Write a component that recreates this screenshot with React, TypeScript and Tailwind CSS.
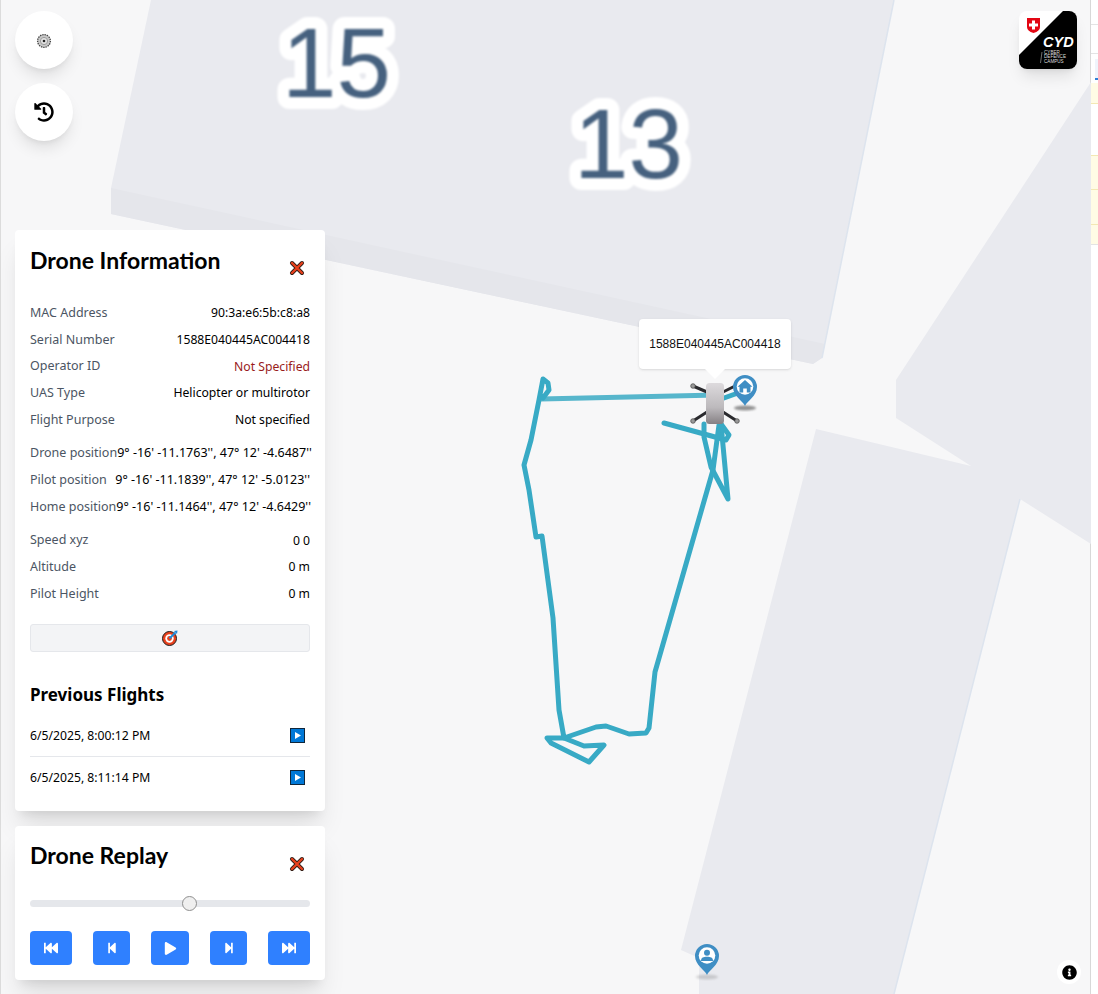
import { FaFastBackward, FaFastForward, FaHistory, FaInfoCircle, FaPlay, FaStepBackward, FaStepForward } from "react-icons/fa";

const infoRows = [
  { label: "MAC Address", value: "90:3a:e6:5b:c8:a8" },
  { label: "Serial Number", value: "1588E040445AC004418" },
  { label: "Operator ID", value: "Not Specified", missing: true },
  { label: "UAS Type", value: "Helicopter or multirotor" },
  { label: "Flight Purpose", value: "Not specified" },
];

const positionRows = [
  { label: "Drone position", value: "9° -16' -11.1763'', 47° 12' -4.6487''" },
  { label: "Pilot position", value: "9° -16' -11.1839'', 47° 12' -5.0123''" },
  { label: "Home position", value: "9° -16' -11.1464'', 47° 12' -4.6429''" },
];

const motionRows = [
  { label: "Speed xyz", value: "0 0" },
  { label: "Altitude", value: "0 m" },
  { label: "Pilot Height", value: "0 m" },
];

const flights = ["6/5/2025, 8:00:12 PM", "6/5/2025, 8:11:14 PM"];

function Row({ label, value, missing, wide }: { label: string; value: string; missing?: boolean; wide?: boolean }) {
  return (
    <div className="flex h-[26.7px] items-center justify-between whitespace-nowrap">
      <span className="text-[#4b5563]">{label}</span>
      <span className={`${wide ? "text-[12.5px]" : "text-[12.2px]"} ${missing ? "text-[#991b1b]" : "text-black"}`}>{value}</span>
    </div>
  );
}

function CloseIcon() {
  return (
    <svg width="16" height="16" viewBox="0 0 16 16" className="mt-[15px] mr-[5px] shrink-0">
      <path d="M3 3 L13 13 M13 3 L3 13" stroke="#2b1a14" strokeWidth="4" strokeLinecap="round" />
      <path d="M3 3 L13 13 M13 3 L3 13" stroke="#e8401c" strokeWidth="2.4" strokeLinecap="round" />
    </svg>
  );
}

function PlayBox() {
  return (
    <svg width="15" height="15" viewBox="0 0 15 15" className="mr-[5px]">
      <rect x="0.5" y="0.5" width="14" height="14" fill="#0078d7" stroke="#10263a" />
      <path d="M5 4 L11 7.5 L5 11 Z" fill="#fff" />
    </svg>
  );
}

function TargetIcon() {
  return (
    <svg width="16" height="16" viewBox="0 0 16 16">
      <circle cx="7.5" cy="8.5" r="7" fill="#e8401c" stroke="#1f1f1f" />
      <circle cx="7.5" cy="8.5" r="4.2" fill="#fff" />
      <circle cx="7.5" cy="8.5" r="2.4" fill="#e8401c" />
      <path d="M7.5 8.5 L13.5 2.5" stroke="#1e88d8" strokeWidth="2" />
      <path d="M12 1 L15.5 0.5 L15 4 Z" fill="#1e88d8" />
    </svg>
  );
}

function DroneGlyph() {
  return (
    <svg width="16" height="16" viewBox="0 0 16 16" className="mt-[1px]">
      <circle cx="8" cy="8" r="6.4" fill="#c9c9c9" stroke="#444" strokeWidth="1.3" strokeDasharray="1.4 0.9" />
      <circle cx="8" cy="8" r="3.6" fill="#e4e4e4" stroke="#9a9a9a" />
      <circle cx="8" cy="8" r="1.3" fill="#222" />
    </svg>
  );
}

function SwissLogo() {
  return (
    <div className="relative h-[58px] w-[58px] overflow-hidden rounded-lg bg-white shadow-lg">
      <svg width="58" height="58" viewBox="0 0 58 58" className="absolute inset-0">
        <path d="M44 0 H58 V58 H0 V44 Z" fill="#000" />
        <path d="M8 7 H21 V16 Q21 20 14.5 22 Q8 20 8 16 Z" fill="#e30613" />
        <path d="M13 9.5 H16 V12.5 H19 V15.5 H16 V18.5 H13 V15.5 H10 V12.5 H13 Z" fill="#fff" />
        <path d="M23 41 L21.5 52" stroke="#ddd" strokeWidth="0.5" />
      </svg>
      <span className="absolute top-[22px] left-[24px] font-['Liberation_Sans',sans-serif] text-[14.5px] leading-[19px] font-bold text-white italic">CYD</span>
      <div className="absolute top-[40px] left-[25px] font-['Liberation_Sans',sans-serif] text-[4.6px] leading-[4.4px] text-[#ddd]">
        <div>CYBER</div>
        <div>DEFENCE</div>
        <div>CAMPUS</div>
      </div>
    </div>
  );
}

function Pin({ kind }: { kind: "home" | "person" }) {
  return (
    <svg width="30" height="38" viewBox="0 0 30 38">
      <ellipse cx="15" cy="34" rx="11" ry="2.6" fill="#666" opacity={kind === "home" ? 0.7 : 0.25} className="blur-[1px]" />
      <path d="M15 32 C13 27 3 22 3 13 A12 12 0 0 1 27 13 C27 22 17 27 15 32 Z" fill="#3f8ec4" />
      <circle cx="15" cy="12.5" r="8.3" fill="#fff" />
      {kind === "home" ? (
        <path d="M15 6 L22.5 12.8 H20.5 V18.5 H16.8 V14.5 H13.2 V18.5 H9.5 V12.8 H7.5 Z" fill="#3f8ec4" />
      ) : (
        <>
          <circle cx="15" cy="9.8" r="3" fill="#3f8ec4" />
          <path d="M9 18 C9 14.5 11.5 13.8 15 13.8 C18.5 13.8 21 14.5 21 18 Z" fill="#3f8ec4" />
        </>
      )}
    </svg>
  );
}

function DroneMarker() {
  return (
    <svg width="52" height="44" viewBox="0 0 52 44">
      <defs>
        <linearGradient id="droneBody" x1="0" y1="0" x2="0" y2="1">
          <stop offset="0" stopColor="#dddadd" />
          <stop offset="0.6" stopColor="#bcb9bc" />
          <stop offset="1" stopColor="#858084" />
        </linearGradient>
      </defs>
      <path d="M4 4 L18 10 M46 4 L34 10 M4 39 L18 30 M48 39 L34 30" stroke="#2a2a2e" strokeWidth="3" />
      <circle cx="4" cy="4" r="2.3" fill="#999" stroke="#444" strokeWidth="0.7" />
      <circle cx="4" cy="39" r="2.3" fill="#999" stroke="#444" strokeWidth="0.7" />
      <circle cx="48" cy="39" r="2.3" fill="#999" stroke="#444" strokeWidth="0.7" />
      <rect x="17" y="1" width="18" height="41" rx="3.5" fill="url(#droneBody)" />
    </svg>
  );
}

function MapDrawing() {
  return (
    <svg width="1090" height="994" viewBox="0 0 1090 994" className="absolute inset-0">
      <g className="blur-[0.6px]">
        <path d="M150 0 H893 L821 358 L812 364 L110 214 V188 Z" fill="#e9eaef" />
        <path d="M110 188 V214 L812 364 L821 358 L824 344 Z" fill="#e5e6eb" />
        <path d="M893 0 L821 358" stroke="#dde4ee" strokeWidth="1.5" fill="none" />
        <path d="M1090 82 L895 380 V418 L970 466 L815 429 L680 950 L698 958 V994 H893 L1019 499 L1090 544 Z" fill="#e9eaef" />
        <path d="M1019 499 L893 994" stroke="#dde4ee" strokeWidth="1.5" fill="none" />
      </g>
      <g className="blur-[1.2px]" fontFamily="Liberation Sans, sans-serif" fontSize="98" fill="#46617f" stroke="#ffffff" strokeWidth="24" strokeLinejoin="round" paintOrder="stroke">
        <text x="281" y="97">15</text>
        <text x="573" y="178">13</text>
      </g>
      <polyline points="540,399 716,395" fill="none" stroke="#57b6cc" strokeWidth="5" />
      <g fill="none" stroke="#38aac5" strokeWidth="5" strokeLinecap="round" strokeLinejoin="round">
        <polyline points="723,398 737,393 746,388" />
        <polyline points="663,423 725,440 728,435 720,424" />
        <polyline points="703,424 703,437 710,467 727,499 720,424" />
        <polyline points="718,425 712,470 654,672 648,728 645,733 628,734 605,726 595,727 563,738 558,710 552,618 541,536 535,537 528,490 523,465 530,440 538,400 542,379 547,383 548,390 542,398" />
        <polyline points="563,738 546,738 550,743 588,762 603,745 583,746 563,738" />
      </g>
    </svg>
  );
}

function ReplayButton({ width, children }: { width: string; children: React.ReactNode }) {
  return <button className={`flex h-[34px] items-center justify-center rounded bg-[#2f80ff] text-white ${width}`}>{children}</button>;
}

export default function App() {
  return (
    <div className="flex h-[994px] w-full overflow-hidden bg-white font-['Noto_Sans',sans-serif] text-[12.5px]">
      <main className="relative flex-1 border-l border-[#dcdcdc] bg-[#f7f7f8]">
        <MapDrawing />

        <div className="absolute top-[319px] left-[638px] w-[152px]">
          <div className="flex h-[50px] items-center justify-center rounded bg-white font-['Liberation_Sans',sans-serif] text-[12px] text-[#111] shadow-sm">1588E040445AC004418</div>
          <div className="mx-auto h-0 w-0 border-x-[10px] border-t-[10px] border-x-transparent border-t-white" />
        </div>
        <div className="absolute top-[382px] left-[688px]"><DroneMarker /></div>
        <div className="absolute top-[374px] left-[729px]"><Pin kind="home" /></div>
        <div className="absolute top-[943px] left-[691px]"><Pin kind="person" /></div>

        <div className="absolute top-[960px] left-[1056px] flex h-6 w-6 items-center justify-center rounded-full bg-white text-[15px] text-black">
          <FaInfoCircle />
        </div>

        <div className="absolute top-[11px] right-[13px]"><SwissLogo /></div>

        <div className="absolute top-[11px] left-[14px] flex w-[310px] flex-col">
          <button className="flex h-[58px] w-[58px] items-center justify-center rounded-full bg-white shadow-lg"><DroneGlyph /></button>
          <button className="mt-[14px] flex h-[58px] w-[58px] items-center justify-center rounded-full bg-white text-[20px] text-black shadow-lg"><FaHistory /></button>

          <section className="mt-[89px] h-[581px] rounded bg-white px-[15px] pt-[15px] shadow-xl">
            <div className="flex h-[55px] items-start justify-between">
              <h2 className="font-['Lato',sans-serif] text-[23px] leading-[30px] font-bold text-black">Drone Information</h2>
              <CloseIcon />
            </div>
            {infoRows.map((row) => <Row key={row.label} {...row} />)}
            <div className="mt-[7px]">
              {positionRows.map((row) => <Row key={row.label} {...row} wide />)}
            </div>
            <div className="mt-[7px]">
              {motionRows.map((row) => <Row key={row.label} {...row} />)}
            </div>
            <button className="mt-[16px] flex h-7 w-full items-center justify-center rounded-[3px] border border-[#e5e7eb] bg-[#f3f4f6]"><TargetIcon /></button>
            <h3 className="mt-[30px] text-[17px] leading-[26px] font-bold text-black">Previous Flights</h3>
            <div className="mt-[7px]">
              {flights.map((flight, i) => (
                <div key={flight} className={`flex h-[42px] items-center justify-between text-black ${i === 0 ? "border-b border-[#e5e7eb]" : ""}`}>
                  <span className="mt-[2px] text-[12.2px]">{flight}</span>
                  <PlayBox />
                </div>
              ))}
            </div>
          </section>

          <section className="mt-[15px] h-[154px] rounded bg-white px-[15px] pt-[15px] shadow-xl">
            <div className="flex h-[59px] items-start justify-between">
              <h2 className="font-['Lato',sans-serif] text-[23px] leading-[28px] font-bold text-black">Drone Replay</h2>
              <CloseIcon />
            </div>
            <div className="relative h-[7px] rounded-full bg-[#e5e7eb]">
              <div className="absolute top-[-4px] left-[152px] h-[15px] w-[15px] rounded-full border border-[#8f8f8f] bg-[#efefef]" />
            </div>
            <div className="mt-6 flex justify-between">
              <ReplayButton width="w-[42px]"><FaFastBackward size={14} /></ReplayButton>
              <ReplayButton width="w-[37px]"><FaStepBackward size={12} /></ReplayButton>
              <ReplayButton width="w-[38px]"><FaPlay size={13} /></ReplayButton>
              <ReplayButton width="w-[37px]"><FaStepForward size={12} /></ReplayButton>
              <ReplayButton width="w-[42px]"><FaFastForward size={14} /></ReplayButton>
            </div>
          </section>
        </div>
      </main>

      <aside className="flex w-[8px] flex-col border-l border-[#d8d8d8] bg-white">
        <div className="h-[25px] border-b border-[#e4e4e4]" />
        <div className="h-[29px] border-b border-[#e4e4e4]" />
        <div className="h-[29px] pt-[5px] pl-[4px]"><div className="h-[21px] border-b-2 border-[#2f80d8] bg-[#f0f4fb]" /></div>
        <div className="h-[21px] border-b border-[#f3e8b4] bg-[#fffbe5]" />
        <div className="h-[51px]" />
        <div className="h-[35px] border-y border-[#f3e8b4] bg-[#fffbe5]" />
        <div className="h-[35px] border-b border-[#f3e8b4] bg-[#fffbe5]" />
        <div className="h-[20px] border-b border-[#e4e4e4] bg-[#fffbe5]" />
      </aside>
    </div>
  );
}
